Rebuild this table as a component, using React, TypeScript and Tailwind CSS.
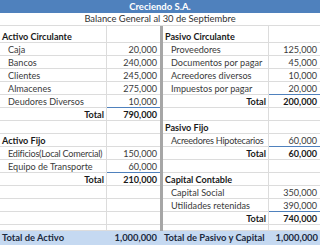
import React from "react";

type Kind = "head" | "item" | "total" | "blank";
type Cell = { label?: string; value?: string; kind: Kind; line?: boolean; tight?: boolean };

const B: Cell = { kind: "blank" };

const rows: { h: string; l: Cell; r: Cell }[] = [
  { h: "h-[17px]", l: { label: "Activo Circulante", kind: "head" }, r: { label: "Pasivo Circulante", kind: "head" } },
  { h: "h-[13px]", l: { label: "Caja", value: "20,000", kind: "item" }, r: { label: "Proveedores", value: "125,000", kind: "item" } },
  { h: "h-[13px]", l: { label: "Bancos", value: "240,000", kind: "item" }, r: { label: "Documentos por pagar", value: "45,000", kind: "item" } },
  { h: "h-[13px]", l: { label: "Clientes", value: "245,000", kind: "item" }, r: { label: "Acreedores diversos", value: "10,000", kind: "item" } },
  { h: "h-[13px]", l: { label: "Almacenes", value: "275,000", kind: "item" }, r: { label: "Impuestos por pagar", value: "20,000", kind: "item", line: true } },
  { h: "h-[13px]", l: { label: "Deudores Diversos", value: "10,000", kind: "item", line: true }, r: { label: "Total", value: "200,000", kind: "total" } },
  { h: "h-[13px]", l: { label: "Total", value: "790,000", kind: "total" }, r: B },
  { h: "h-[13px]", l: B, r: { label: "Pasivo Fijo", kind: "head" } },
  { h: "h-[13px]", l: { label: "Activo Fijo", kind: "head" }, r: { label: "Acreedores Hipotecarios", value: "60,000", kind: "item", line: true, tight: true } },
  { h: "h-[13px]", l: { label: "Edificios(Local Comercial)", value: "150,000", kind: "item", tight: true }, r: { label: "Total", value: "60,000", kind: "total" } },
  { h: "h-[13px]", l: { label: "Equipo de Transporte", value: "60,000", kind: "item", line: true }, r: B },
  { h: "h-[13px]", l: { label: "Total", value: "210,000", kind: "total" }, r: { label: "Capital Contable", kind: "head" } },
  { h: "h-[13px]", l: B, r: { label: "Capital Social", value: "350,000", kind: "item" } },
  { h: "h-[13px]", l: B, r: { label: "Utilidades retenidas", value: "390,000", kind: "item", line: true } },
  { h: "h-[13px]", l: B, r: { label: "Total", value: "740,000", kind: "total" } },
  { h: "h-[6px]", l: B, r: B },
];

function LabelCell({ c }: { c: Cell }) {
  const base =
    "flex items-center overflow-hidden whitespace-nowrap border-b border-r border-[#dcdcdc] pt-[1px]";
  if (c.kind === "head")
    return <div className={`${base} items-end pb-[1px] pl-[2px] font-bold text-[#1a1a1a]`}>{c.label}</div>;
  if (c.kind === "item")
    return (
      <div className={`${base} pl-[8px] text-[#3a3a3a] ${c.tight ? "tracking-[-0.25px]" : ""}`}>{c.label}</div>
    );
  if (c.kind === "total")
    return <div className={`${base} justify-end pr-[2px] font-bold text-[#1a1a1a]`}>{c.label}</div>;
  return <div className={base} />;
}

function ValueCell({ c }: { c: Cell }) {
  const border = c.line ? "border-[#4f81bd]" : "border-[#dcdcdc]";
  const weight = c.kind === "total" ? "font-bold text-[#1a1a1a]" : "text-[#3a3a3a]";
  return (
    <div className={`flex items-center justify-end whitespace-nowrap border-b ${border} pr-[3px] pt-[1px] ${weight}`}>
      {c.value}
    </div>
  );
}

export default function App() {
  return (
    <div
      className="flex h-[245px] w-[320px] flex-col overflow-hidden bg-white text-[9.1px] leading-none"
      style={{ fontFamily: "Lato, 'Open Sans', sans-serif" }}
    >
      <div className="flex h-[13px] items-center justify-center bg-[#4f81bd] pt-[1px] text-[9.5px] font-bold text-white">
        Creciendo S.A.
      </div>
      <div className="flex h-[13px] items-center justify-center border-b border-[#dcdcdc] text-[9.4px] text-[#333]">
        Balance General al 30 de Septiembre
      </div>
      {rows.map((row, i) => (
        <div key={i} className={`grid ${row.h} grid-cols-[107px_53px_3px_106px_51px]`}>
          <LabelCell c={row.l} />
          <ValueCell c={row.l} />
          <div className="bg-[#a6a6a6]" />
          <LabelCell c={row.r} />
          <ValueCell c={row.r} />
        </div>
      ))}
      <div className="grid h-[14px] grid-cols-[107px_53px_3px_106px_51px] bg-[#c5d9f1] text-[9.4px] font-bold text-[#1b2a3e]">
        <div className="flex items-center whitespace-nowrap pl-[2px]">Total de Activo</div>
        <div className="flex items-center justify-end pr-[3px]">1,000,000</div>
        <div />
        <div className="flex items-center whitespace-nowrap pl-[1px]">Total de Pasivo y Capital</div>
        <div className="flex items-center justify-end pr-[2px]">1,000,000</div>
      </div>
    </div>
  );
}
